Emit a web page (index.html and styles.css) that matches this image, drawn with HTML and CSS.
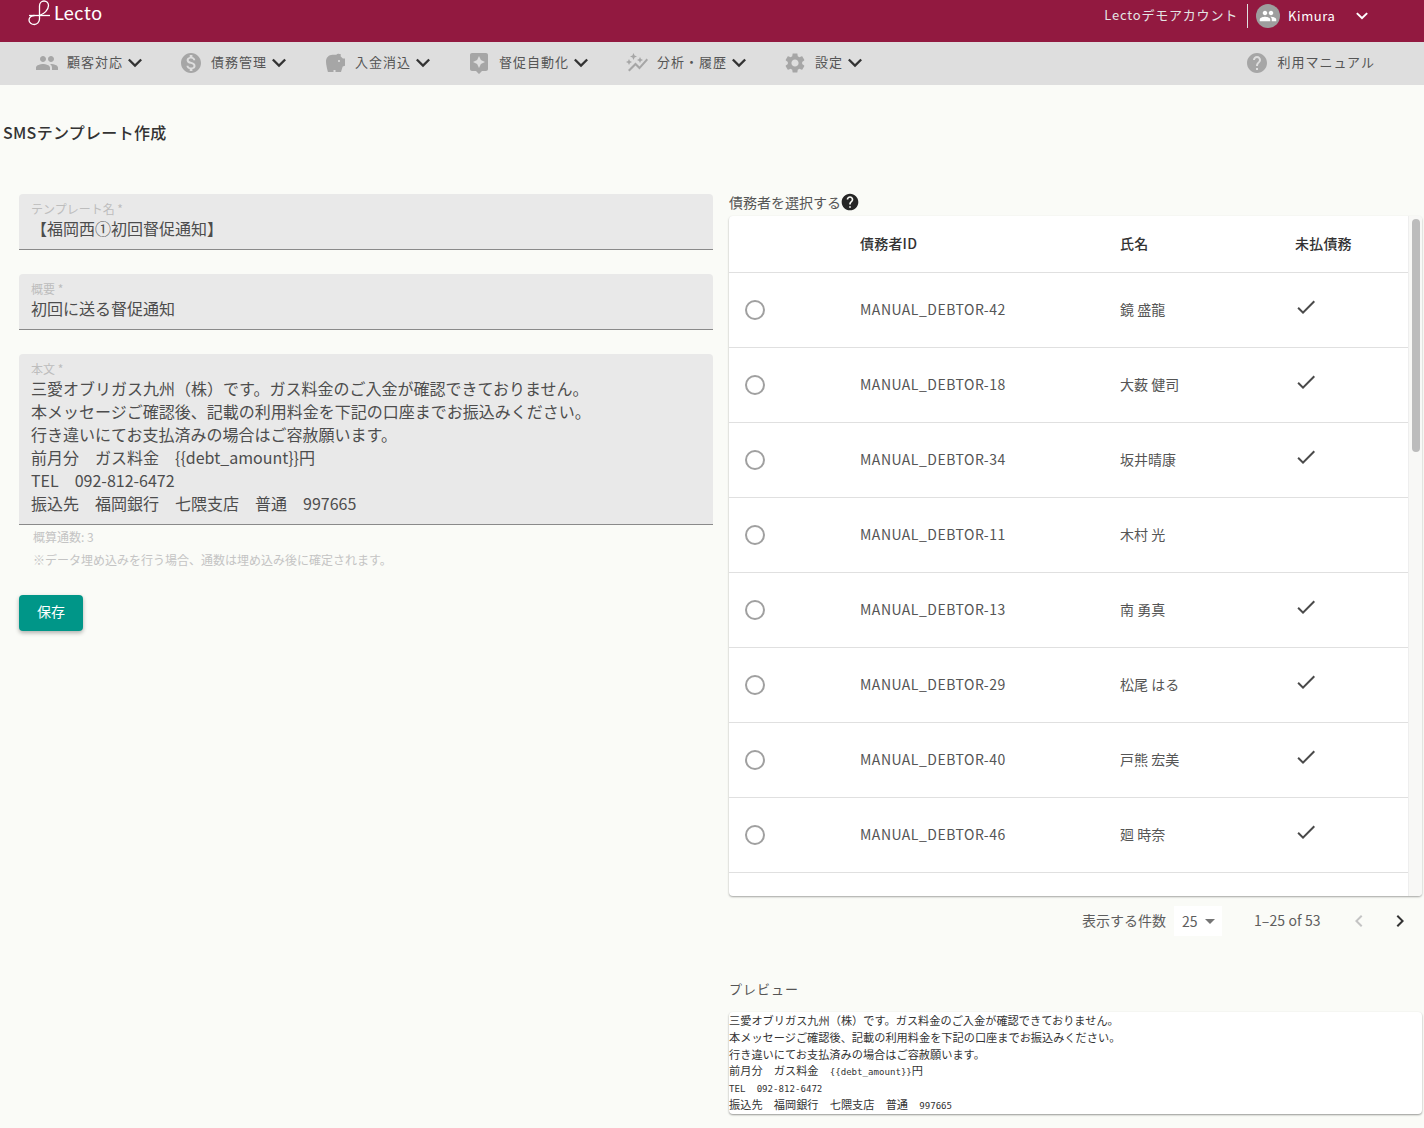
FILE: index.html
```html
<!doctype html>
<html lang="ja">
	<head>
		<meta charset="utf-8"/>
		<title>SMSテンプレート作成</title>
		<link rel="stylesheet" href="styles.css">
	</head>
	<body>
		<svg class="sprite" xmlns="http://www.w3.org/2000/svg">
			<symbol id="i-people" viewBox="0 0 24 24"><path d="M16 11c1.66 0 2.99-1.34 2.99-3S17.66 5 16 5c-1.66 0-3 1.34-3 3s1.34 3 3 3zm-8 0c1.66 0 2.99-1.34 2.99-3S9.66 5 8 5C6.34 5 5 6.34 5 8s1.34 3 3 3zm0 2c-2.33 0-7 1.17-7 3.5V19h14v-2.5c0-2.33-4.67-3.5-7-3.5zm8 0c-.29 0-.62.02-.97.05 1.16.84 1.97 1.97 1.97 3.45V19h6v-2.5c0-2.33-4.67-3.5-7-3.5z"/></symbol>
			<symbol id="i-dollar" viewBox="0 0 24 24"><path d="M12 2C6.48 2 2 6.48 2 12s4.48 10 10 10 10-4.48 10-10S17.52 2 12 2zm1.41 16.09V20h-2.67v-1.93c-1.71-.36-3.16-1.46-3.27-3.4h1.96c.1 1.05.82 1.87 2.65 1.87 1.96 0 2.4-.98 2.4-1.59 0-.83-.44-1.61-2.67-2.14-2.48-.6-4.18-1.62-4.18-3.67 0-1.72 1.39-2.84 3.11-3.21V4h2.67v1.95c1.86.45 2.79 1.86 2.85 3.39H14.3c-.05-1.11-.64-1.87-2.22-1.87-1.5 0-2.4.68-2.4 1.64 0 .84.65 1.39 2.67 1.91s4.18 1.39 4.18 3.91c-.01 1.83-1.38 2.83-3.12 3.16z"/></symbol>
			<symbol id="i-piggy" viewBox="0 0 24 24"><path d="M19.83 7.5l-2.27-2.27c.07-.42.18-.81.32-1.15.11-.26.04-.56-.2-.72-.75-.47-1.65-.7-2.56-.6-.72.08-1.34.46-1.76.99H9.5C5.91 3.75 3 6.66 3 10.25 3 14.5 5 21 5 21h5.5v-2h2v2H18l1.68-5.59 2.32-.78V7.5h-2.17zM16 11c-.55 0-1-.45-1-1s.45-1 1-1 1 .45 1 1-.45 1-1 1z"/></symbol>
			<symbol id="i-assistant" viewBox="0 0 24 24"><path d="M19 2H5c-1.1 0-2 .9-2 2v14c0 1.1.9 2 2 2h4l3 3 3-3h4c1.1 0 2-.9 2-2V4c0-1.1-.9-2-2-2zm-5.12 10.88L12 17l-1.88-4.12L6 11l4.12-1.88L12 5l1.88 4.12L18 11l-4.12 1.88z"/></symbol>
			<symbol id="i-graph" viewBox="0 0 24 24"><path d="M14.06 9.94L12 9l2.06-.94L15 6l.94 2.06L18 9l-2.06.94L15 12zM4 14l.94-2.06L7 11l-2.06-.94L4 8l-.94 2.06L1 11l2.06.94zm4.5-5l1.09-2.41L12 5.5 9.59 4.41 8.5 2 7.41 4.41 5 5.5l2.41 1.09zm-4 11.5l6-6.01 4 4L23 8.93l-1.41-1.41-7.09 7.97-4-4L3 19z"/></symbol>
			<symbol id="i-gear" viewBox="0 0 24 24"><path d="M19.14 12.94c.04-.3.06-.61.06-.94 0-.32-.02-.64-.07-.94l2.03-1.58c.18-.14.23-.41.12-.61l-1.92-3.32c-.12-.22-.37-.29-.59-.22l-2.39.96c-.5-.38-1.03-.7-1.62-.94l-.36-2.54c-.04-.24-.24-.41-.48-.41h-3.84c-.24 0-.43.17-.47.41l-.36 2.54c-.59.24-1.13.57-1.62.94l-2.39-.96c-.22-.08-.47 0-.59.22L2.74 8.87c-.12.21-.08.47.12.61l2.03 1.58c-.05.3-.09.63-.09.94s.02.64.07.94l-2.03 1.58c-.18.14-.23.41-.12.61l1.92 3.32c.12.22.37.29.59.22l2.39-.96c.5.38 1.03.7 1.62.94l.36 2.54c.05.24.24.41.48.41h3.84c.24 0 .44-.17.47-.41l.36-2.54c.59-.24 1.13-.56 1.62-.94l2.39.96c.22.08.47 0 .59-.22l1.92-3.32c.12-.22.07-.47-.12-.61l-2.01-1.58zM12 15.6c-1.98 0-3.6-1.62-3.6-3.6s1.62-3.6 3.6-3.6 3.6 1.62 3.6 3.6-1.62 3.6-3.6 3.6z"/></symbol>
			<symbol id="i-help" viewBox="0 0 24 24"><path d="M12 2C6.48 2 2 6.48 2 12s4.48 10 10 10 10-4.48 10-10S17.52 2 12 2zm1 17h-2v-2h2v2zm2.07-7.75l-.9.92C13.45 12.9 13 13.5 13 15h-2v-.5c0-1.1.45-2.1 1.17-2.83l1.24-1.26c.37-.36.59-.86.59-1.41 0-1.1-.9-2-2-2s-2 .9-2 2H8c0-2.21 1.79-4 4-4s4 1.79 4 4c0 .88-.36 1.68-.93 2.25z"/></symbol>
			<symbol id="i-check" viewBox="0 0 24 24"><path d="M9 16.17L4.83 12l-1.42 1.41L9 19 21 7l-1.41-1.41z"/></symbol>
			<symbol id="i-down" viewBox="6 8.200 12 8.200"><path d="M16.59 8.59L12 13.17 7.41 8.59 6 10l6 6 6-6z"/></symbol>
			<symbol id="i-left" viewBox="0 0 24 24"><path d="M15.41 7.41L14 6l-6 6 6 6 1.41-1.41L10.83 12z"/></symbol>
			<symbol id="i-right" viewBox="0 0 24 24"><path d="M10 6L8.59 7.41 13.17 12l-4.58 4.59L10 18l6-6z"/></symbol>
			<symbol id="i-drop" viewBox="0 0 24 24"><path d="M7 10l5 5 5-5z"/></symbol>
		</svg>

		<header class="topbar">
			<div class="brand">
				<svg class="brand-mark" viewBox="0 0 24 26" fill="none" stroke="#fff" stroke-width="1.3">
					<path d="M1 15.500H22"/>
					<path d="M11.500 15.500C16 14 20.500 10 20.500 5.500C20.500 3 18.500 1 16 1C13.500 1 11.500 3 11.500 6V19C11.500 22 9 24.500 6.500 24.500C3.500 24.500 1 22.500 1 20C1 17.500 3.500 15.500 6.500 15.500"/>
				</svg>
				<span class="brand-name">Lecto</span>
			</div>
			<div class="account">
				<span class="account-org">Lectoデモアカウント</span>
				<span class="avatar"><svg class="avatar-icon"><use href="#i-people"/></svg></span>
				<span class="account-user">Kimura</span>
				<svg class="account-down"><use href="#i-down"/></svg>
			</div>
		</header>

		<nav class="navbar">
			<a class="nav-item"><svg class="nav-icon"><use href="#i-people"/></svg><span>顧客対応</span><svg class="nav-down"><use href="#i-down"/></svg></a>
			<a class="nav-item"><svg class="nav-icon"><use href="#i-dollar"/></svg><span>債務管理</span><svg class="nav-down"><use href="#i-down"/></svg></a>
			<a class="nav-item"><svg class="nav-icon"><use href="#i-piggy"/></svg><span>入金消込</span><svg class="nav-down"><use href="#i-down"/></svg></a>
			<a class="nav-item"><svg class="nav-icon"><use href="#i-assistant"/></svg><span>督促自動化</span><svg class="nav-down"><use href="#i-down"/></svg></a>
			<a class="nav-item"><svg class="nav-icon"><use href="#i-graph"/></svg><span>分析・履歴</span><svg class="nav-down"><use href="#i-down"/></svg></a>
			<a class="nav-item"><svg class="nav-icon"><use href="#i-gear"/></svg><span>設定</span><svg class="nav-down"><use href="#i-down"/></svg></a>
			<a class="nav-item nav-manual"><svg class="nav-icon"><use href="#i-help"/></svg><span>利用マニュアル</span></a>
		</nav>

		<main class="page">
			<h1 class="page-title">SMSテンプレート作成</h1>
			<div class="columns">
				<section class="form-col">
					<div class="field">
						<div class="field-label">テンプレート名 *</div>
						<div class="field-value">【福岡西①初回督促通知】</div>
					</div>
					<div class="field">
						<div class="field-label">概要 *</div>
						<div class="field-value">初回に送る督促通知</div>
					</div>
					<div class="field field-area">
						<div class="field-label">本文 *</div>
						<div class="field-value">三愛オブリガス九州（株）です。ガス料金のご入金が確認できておりません。<br>本メッセージご確認後、記載の利用料金を下記の口座までお振込みください。<br>行き違いにてお支払済みの場合はご容赦願います。<br>前月分　ガス料金　{{debt_amount}}円<br>TEL　092-812-6472<br>振込先　福岡銀行　七隈支店　普通　997665</div>
					</div>
					<p class="hint hint-count">概算通数: 3</p>
					<p class="hint">※データ埋め込みを行う場合、通数は埋め込み後に確定されます。</p>
					<button class="save-btn">保存</button>
				</section>

				<section class="debtor-col">
					<div class="debtor-label">債務者を選択する<svg class="debtor-help"><use href="#i-help"/></svg></div>
					<div class="table-card">
						<table class="debtors">
							<thead>
								<tr><th class="c-radio"></th><th class="c-id">債務者ID</th><th class="c-name">氏名</th><th>未払債務</th></tr>
							</thead>
							<tbody>
								<tr><td><span class="radio"></span></td><td>MANUAL_DEBTOR-42</td><td>鏡 盛龍</td><td><svg class="check"><use href="#i-check"/></svg></td></tr>
								<tr><td><span class="radio"></span></td><td>MANUAL_DEBTOR-18</td><td>大薮 健司</td><td><svg class="check"><use href="#i-check"/></svg></td></tr>
								<tr><td><span class="radio"></span></td><td>MANUAL_DEBTOR-34</td><td>坂井晴康</td><td><svg class="check"><use href="#i-check"/></svg></td></tr>
								<tr><td><span class="radio"></span></td><td>MANUAL_DEBTOR-11</td><td>木村 光</td><td></td></tr>
								<tr><td><span class="radio"></span></td><td>MANUAL_DEBTOR-13</td><td>南 勇真</td><td><svg class="check"><use href="#i-check"/></svg></td></tr>
								<tr><td><span class="radio"></span></td><td>MANUAL_DEBTOR-29</td><td>松尾 はる</td><td><svg class="check"><use href="#i-check"/></svg></td></tr>
								<tr><td><span class="radio"></span></td><td>MANUAL_DEBTOR-40</td><td>戸熊 宏美</td><td><svg class="check"><use href="#i-check"/></svg></td></tr>
								<tr><td><span class="radio"></span></td><td>MANUAL_DEBTOR-46</td><td>廻 時奈</td><td><svg class="check"><use href="#i-check"/></svg></td></tr>
							</tbody>
						</table>
						<div class="scroll-track"><div class="scroll-thumb"></div></div>
					</div>
					<div class="pager">
						<span class="pager-label">表示する件数</span>
						<span class="pager-select">25<svg class="pager-drop"><use href="#i-drop"/></svg></span>
						<span class="pager-range">1–25 of 53</span>
						<svg class="pager-arrow pager-off"><use href="#i-left"/></svg>
						<svg class="pager-arrow"><use href="#i-right"/></svg>
					</div>
					<div class="preview-label">プレビュー</div>
					<div class="preview">
						<div>三愛オブリガス九州（株）です。ガス料金のご入金が確認できておりません。</div>
						<div>本メッセージご確認後、記載の利用料金を下記の口座までお振込みください。</div>
						<div>行き違いにてお支払済みの場合はご容赦願います。</div>
						<div>前月分　ガス料金　<span class="mono">{{debt_amount}}</span>円</div>
						<div><span class="mono">TEL</span>　<span class="mono">092-812-6472</span></div>
						<div>振込先　福岡銀行　七隈支店　普通　<span class="mono">997665</span></div>
					</div>
				</section>
			</div>
		</main>
	</body>
</html>
```

FILE: styles.css
```css
html, body {
	height: 100%;
}

body {
	margin: 0;
	height: 1128px;
	overflow: hidden;
	background-color: #fafbf7;
	color: #3c3c3c;
	font-family: "Noto Sans CJK JP", sans-serif;
}

.sprite {
	display: none;
}

/* top bar */
.topbar {
	display: flex;
	justify-content: space-between;
	align-items: flex-start;
	height: 42px;
	padding: 0 56px 0 28px;
	background-color: #921940;
	color: #fff;
}

.brand {
	display: flex;
	align-items: center;
	height: 26px;
}

.brand-mark {
	width: 24px;
	height: 26px;
	margin-right: 2px;
}

.brand-name {
	font-family: Lato, sans-serif;
	font-size: 19px;
	font-weight: 400;
	letter-spacing: .6px;
	margin-top: -2px;
}

.account {
	display: flex;
	align-items: center;
	height: 24px;
	margin-top: 4px;
	font-size: 13px;
	letter-spacing: .8px;
}

.account-org {
	padding-right: 9px;
	line-height: 22px;
	padding-bottom: 2px;
	border-right: 1px solid #e0e0e0;
	color: #e4e4e4;
}

.avatar {
	display: flex;
	align-items: center;
	justify-content: center;
	width: 24px;
	height: 24px;
	margin-left: 8px;
	border-radius: 50%;
	background-color: #9e9e9e;
}

.avatar-icon {
	width: 18px;
	height: 18px;
	fill: #fff;
}

.account-user {
	margin: -2px 0 0 8px;
	width: 68px;
	letter-spacing: .6px;
}

.account-down {
	width: 12px;
	height: 8px;
	fill: #fff;
}

/* menu bar */
.navbar {
	display: flex;
	align-items: center;
	height: 42.7px;
	padding-left: 35px;
	padding-right: 49px;
	background-color: #dedede;
}

.nav-item {
	display: flex;
	align-items: center;
	margin-right: 37px;
	font-size: 13px;
	letter-spacing: 1px;
	color: #555;
}

.nav-item span {
	margin-top: -4px;
}

.nav-icon {
	width: 24px;
	height: 24px;
	margin-right: 8px;
	fill: #a6a6a6;
}

.nav-down {
	width: 14px;
	height: 10px;
	margin-left: 5px;
	fill: #333;
}

.nav-manual {
	margin-left: auto;
	margin-right: 0;
}

/* page */
.page {
	padding: 0 2px 0 3px;
}

.page-title {
	margin: 0;
	padding-top: 37px;
	height: 72.3px;
	font-size: 16px;
	font-weight: 500;
	line-height: 20px;
	letter-spacing: .3px;
	color: #333;
}

.columns {
	display: flex;
	gap: 16px;
}

.form-col {
	width: 694px;
	margin-left: 16px;
}

.debtor-col {
	width: 693px;
	margin-top: -1px;
}

/* left form */
.field {
	box-sizing: border-box;
	height: 56px;
	margin-bottom: 24px;
	padding: 8px 12px 0;
	background-color: #e9e9e9;
	border-bottom: 1px solid #8a8a8a;
	border-radius: 4px 4px 0 0;
}

.field-label {
	height: 14px;
	font-size: 12px;
	line-height: 14px;
	color: #bdbdbd;
}

.field-value {
	margin-top: 1px;
	font-size: 16px;
	line-height: 23px;
	color: #4d4d4d;
}

.field-area {
	height: 171px;
	margin-bottom: 0;
}

.hint {
	margin: 0;
	padding-left: 14px;
	font-size: 12px;
	line-height: 16px;
	color: #c4c4c4;
}

.hint-count {
	margin-top: 4px;
	margin-bottom: 7px;
}

.save-btn {
	display: block;
	width: 64px;
	height: 36px;
	margin-top: 27px;
	padding: 0 0 4px;
	border: none;
	border-radius: 4px;
	background-color: #009688;
	color: #fff;
	font-family: inherit;
	font-size: 14px;
	box-shadow: 0 2px 4px rgba(0, 0, 0, 0.3);
}

/* debtor table */
.debtor-label {
	display: flex;
	align-items: center;
	height: 19px;
	margin-bottom: 4px;
	font-size: 14px;
	color: #555;
}

.debtor-help {
	width: 20px;
	height: 20px;
	margin-left: -1px;
	fill: #262626;
}

.table-card {
	display: flex;
	height: 680px;
	overflow: hidden;
	background-color: #fff;
	border-radius: 4px;
	box-shadow: 0 1px 2px rgba(0, 0, 0, 0.35);
}

.debtors {
	flex: 1;
	align-self: flex-start;
	border-collapse: collapse;
	table-layout: fixed;
	font-size: 14px;
	color: #555;
}

.debtors th {
	height: 54px;
	padding: 0 0 2px;
	font-weight: 500;
	text-align: left;
	letter-spacing: .2px;
	color: #333;
	border-bottom: 1px solid #e0e0e0;
}

.debtors td {
	height: 72px;
	padding: 0 0 2px;
	border-bottom: 1px solid #e0e0e0;
}

.debtors td:nth-child(2) {
	letter-spacing: .5px;
}

.c-radio {
	width: 131px;
}

.c-id {
	width: 260px;
}

.c-name {
	width: 175px;
}

.radio {
	display: block;
	box-sizing: border-box;
	width: 20px;
	height: 20px;
	margin: 2px 0 0 16px;
	border: 2px solid #a0a0a0;
	border-radius: 50%;
}

.check {
	display: block;
	width: 24px;
	height: 24px;
	margin: -4px 0 0 -1px;
	fill: #4a4a4a;
}

.scroll-track {
	width: 14px;
	flex: none;
	padding: 3px;
	background-color: #f8f8f6;
	border-left: 1px solid #eee;
	box-sizing: border-box;
}

.scroll-thumb {
	width: 8px;
	height: 233px;
	border-radius: 4px;
	background-color: #bcbcbc;
}

/* pagination */
.pager {
	display: flex;
	align-items: center;
	height: 50px;
	font-size: 14px;
	color: #5e5e5e;
}

.pager-label {
	margin: -2px 0 0 353px;
}

.pager-select {
	display: flex;
	align-items: center;
	box-sizing: border-box;
	width: 48px;
	height: 30px;
	margin-left: 8px;
	padding-left: 8px;
	background-color: #fff;
}

.pager-drop {
	width: 24px;
	height: 24px;
	fill: #757575;
}

.pager-range {
	margin: -1px 0 0 32px;
	letter-spacing: .1px;
}

.pager-arrow {
	width: 24px;
	height: 24px;
	margin-left: 17px;
	fill: #333;
}

.pager-off {
	margin-left: 26px;
	fill: #c4c4c4;
}

/* preview */
.preview-label {
	margin-top: 33px;
	height: 33px;
	font-size: 13px;
	line-height: 20px;
	letter-spacing: 1px;
	color: #555;
}

.preview {
	height: 102px;
	background-color: #fff;
	border-radius: 4px;
	box-shadow: 0 1px 2px rgba(0, 0, 0, 0.4);
	font-size: 11.2px;
	line-height: 16.8px;
	color: #333;
}

.preview div {
	height: 16.8px;
}

.mono {
	font-family: "DejaVu Sans Mono", monospace;
	font-size: 9.1px;
	line-height: 1;
}
```
